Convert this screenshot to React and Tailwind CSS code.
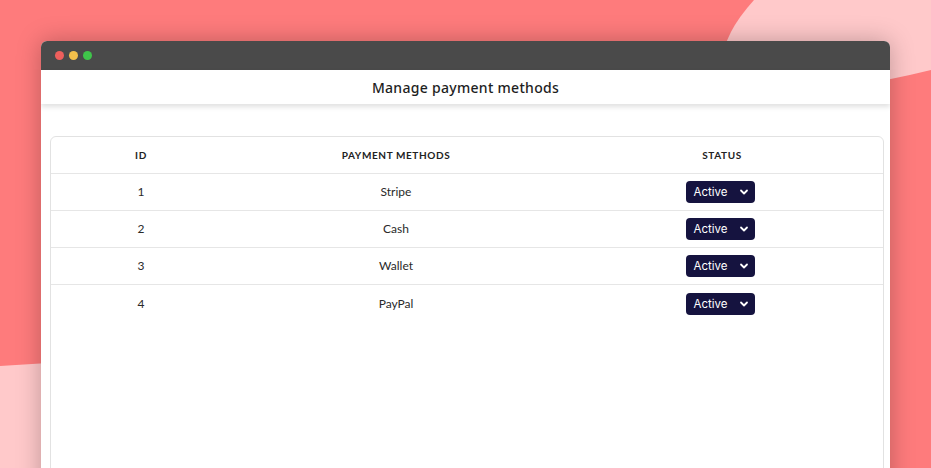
import React from 'react';

const methods = [
  { id: 1, name: 'Stripe' },
  { id: 2, name: 'Cash' },
  { id: 3, name: 'Wallet' },
  { id: 4, name: 'PayPal' },
];

function StatusSelect() {
  return (
    <div className="flex h-[22px] w-[69px] items-center justify-between rounded-[4px] bg-[#15133f] pl-[8px] pr-[6px] text-[11.5px] leading-none text-white" style={{ fontFamily: 'Inter, sans-serif' }}>
      <span className="pt-[2px]">Active</span>
      <svg width="10" height="10" viewBox="0 0 10 10" fill="none">
        <path d="M2 3.5 L5 6.5 L8 3.5" stroke="white" strokeWidth="1.8" strokeLinecap="round" strokeLinejoin="round" />
      </svg>
    </div>
  );
}

export default function App() {
  return (
    <div className="relative h-[468px] w-[931px] overflow-hidden bg-[#fe7b7c]" style={{ fontFamily: 'Lato, "Noto Sans", sans-serif' }}>
      {/* Background shapes */}
      <svg className="absolute inset-0" width="931" height="468" viewBox="0 0 931 468">
        <path d="M754 0 Q 700 60 740 95 Q 830 95 931 70 L 931 0 Z" fill="#ffc9ca" />
        <path d="M0 366 L 80 361 L 80 468 L 0 468 Z" fill="#ffc9ca" />
      </svg>

      <div className="relative pl-[41px] pt-[41px]">
        <div className="w-[849px] overflow-hidden rounded-t-[6px] bg-white shadow-[0_0_24px_rgba(0,0,0,0.25)]">
          {/* Title bar */}
          <div className="flex h-[29px] items-center gap-[5px] bg-[#4a4a4a] pl-[14px]">
            <span className="h-[9px] w-[9px] rounded-full bg-[#ee5f5c]" />
            <span className="h-[9px] w-[9px] rounded-full bg-[#f4c04b]" />
            <span className="h-[9px] w-[9px] rounded-full bg-[#3fc54a]" />
          </div>

          {/* Header */}
          <div className="relative z-10 flex h-[34px] items-center justify-center bg-white text-[14px] font-medium tracking-[0.3px] text-[#1e1e1e] shadow-[0_3px_5px_rgba(0,0,0,0.12)]" style={{ fontFamily: '"Noto Sans", sans-serif' }}>
            Manage payment methods
          </div>

          {/* Content */}
          <div className="h-[400px] pl-[9px] pr-[6px] pt-[32px]">
            <div className="h-[400px] rounded-[6px] border border-[#e2e2e2]">
              <div className="grid h-[37px] grid-cols-[180px_330px_1fr] items-center border-b border-[#e6e6e6] text-[10px] font-bold tracking-[0.6px] text-[#222]">
                <div className="text-center">ID</div>
                <div className="text-center">PAYMENT METHODS</div>
                <div className="text-center">STATUS</div>
              </div>
              {methods.map((m, i) => (
                <div
                  key={m.id}
                  className={`grid h-[37px] grid-cols-[180px_330px_1fr] items-center text-[12px] text-[#2a2a2a] ${i < methods.length - 1 ? 'border-b border-[#e6e6e6]' : ''}`}
                >
                  <div className="text-center">{m.id}</div>
                  <div className="text-center">{m.name}</div>
                  <div className="flex justify-center pr-[4px]">
                    <StatusSelect />
                  </div>
                </div>
              ))}
            </div>
          </div>
        </div>
      </div>
    </div>
  );
}
